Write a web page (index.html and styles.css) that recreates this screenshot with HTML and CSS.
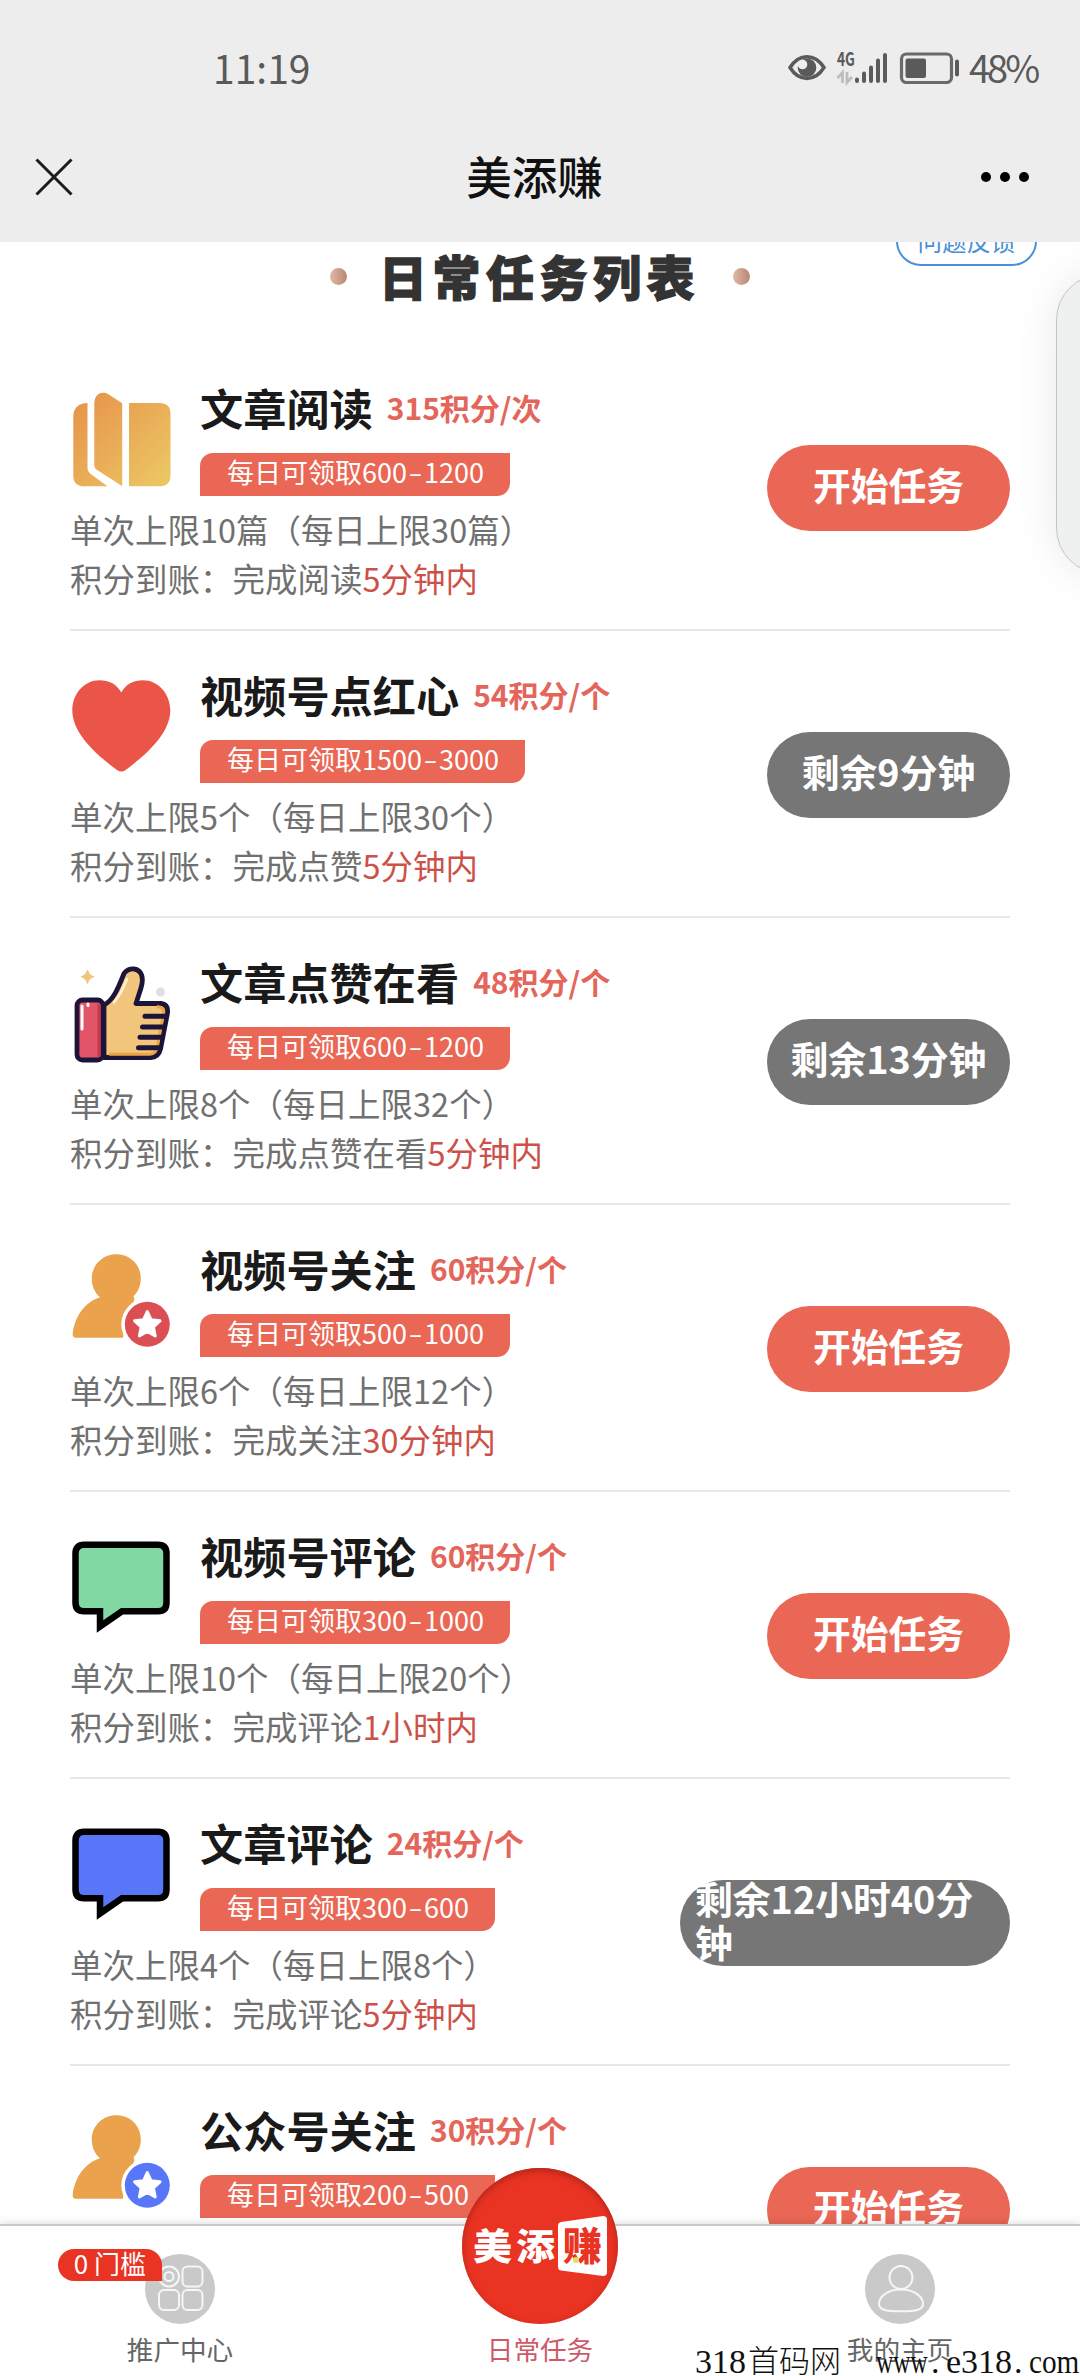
FILE: index.html
```html
<!DOCTYPE html>
<html lang="zh-CN">
<head>
<meta charset="utf-8">
<title>美添赚</title>
<link rel="stylesheet" href="styles.css">
</head>
<body>
<svg class="defs" width="0" height="0">
  <defs>
    <linearGradient id="gold" x1="0" y1="0" x2="100" y2="100" gradientUnits="userSpaceOnUse">
      <stop offset="0" stop-color="#e68f48"/><stop offset="1" stop-color="#ecca66"/>
    </linearGradient>
    <symbol id="user" viewBox="0 0 100 100">
      <path fill="#eaa24d" d="M45.3 4.3C59 4.3 69.8 14.500 69.800 28.500C69.800 36 67 42 62.500 46L63.500 49.500L54 70L52 87.700H5Q1.300 87.700 1.700 83.500C4 66 14 52 29 47.300C24 43 20.800 36.500 20.800 28.500C20.800 14.500 32 4.300 45.300 4.300Z"/>
      <circle cx="76.300" cy="74.300" r="26" fill="#fff"/>
      <circle cx="76.300" cy="74.300" r="22.500" fill="currentColor"/>
      <path fill="#fff" stroke="#fff" stroke-width="3" stroke-linejoin="round" d="M76.300 61.500L80.100 69.800L89 70.800L82.400 76.900L84.200 86L76.300 81.500L68.400 86L70.200 76.900L63.600 70.800L72.500 69.800Z"/>
    </symbol>
    <symbol id="bubble" viewBox="0 0 100 100">
      <path fill="currentColor" stroke="#000" stroke-width="6.500" d="M13 7.700H87Q95.500 7.700 95.500 16.500V65.500Q95.500 74.300 87 74.300H51L29 89.500V74.300H13Q4.500 74.300 4.500 65.500V16.500Q4.500 7.700 13 7.700Z"/>
    </symbol>
  </defs>
</svg>

<div class="page">
  <header class="top">
    <div class="status">
      <span class="clock">11:19</span>
      <div class="indicators">
        <svg width="172" height="34" viewBox="0 0 172 34">
          <path d="M2 15.500C11 1 27 1 36 15.500C27 30 11 30 2 15.500Z" fill="none" stroke="#5a5a5a" stroke-width="3.500"/>
          <circle cx="19" cy="15.700" r="9.300" fill="#5a5a5a"/>
          <circle cx="14.500" cy="12.500" r="4.800" fill="#ededed"/>
          <text class="net" x="49" y="14" textLength="18" lengthAdjust="spacingAndGlyphs">4G</text>
          <path d="M54.500 31V20.500L49.500 26M59 20V30.500L64 25" fill="none" stroke="#bdbdbd" stroke-width="2.800"/>
          <g stroke="#5a5a5a" stroke-width="4" stroke-linecap="round">
            <path d="M69 27.500V29M76 21.500V29M83 15.500V29M90 8.500V29M97 3V29"/>
          </g>
          <rect x="113.500" y="2" width="50" height="28.500" rx="5" fill="none" stroke="#6a6a6a" stroke-width="3.200"/>
          <rect x="117.500" y="6.500" width="20.500" height="19.500" rx="2" fill="#5a5a5a"/>
          <path d="M169 9.500V22.500" stroke="#5a5a5a" stroke-width="4" stroke-linecap="round"/>
        </svg>
        <span>48%</span>
      </div>
    </div>
    <div class="titlebar">
      <svg width="38" height="38" viewBox="0 0 38 38"><path d="M1.500 1.500L36.500 36.500M36.500 1.500L1.500 36.500" stroke="#1c1c1c" stroke-width="3"/></svg>
      <h1>美添赚</h1>
      <svg width="50" height="12" viewBox="0 0 50 12"><circle cx="6" cy="6" r="5"/><circle cx="25" cy="6" r="5"/><circle cx="44" cy="6" r="5"/></svg>
    </div>
  </header>

  <main class="content">
    <button class="feedback">问题反馈</button>
    <div class="heading"><i></i><h2>日常任务列表</h2><i></i></div>

    <ul class="tasks">
      <li class="task">
        <div class="info">
          <div class="head">
            <svg class="icon" viewBox="0 0 100 100">
              <g fill="url(#gold)">
                <path d="M16.500 14V79Q16.500 82 19 84.500L36.500 97.300H13Q2.300 97.300 2.300 86.500V27Q3 14.500 16.500 14Z"/>
                <path d="M23.300 13Q24.500 3.700 32.500 3.700Q35 3.700 37 5L51.200 14.300V97.300L25.500 80.500Q23.300 79 23.300 76.500Z"/>
                <path d="M58 14H88.500Q99.500 14 99.500 25V86.500Q99.500 97.300 88.500 97.300H58Z"/>
              </g>
            </svg>
            <div>
              <div class="name"><h3>文章阅读</h3><b>315积分/次</b></div>
              <span class="tag">每日可领取600<i>-</i>1200</span>
            </div>
          </div>
          <p>单次上限10篇（每日上限30篇）</p>
          <p>积分到账：完成阅读<em>5分钟内</em></p>
        </div>
        <button class="action">开始任务</button>
      </li>

      <li class="task">
        <div class="info">
          <div class="head">
            <svg class="icon" viewBox="0 0 100 100"><path fill="#eb5548" d="M50.300 16.500C46 8.500 38 4.300 28.500 4.300C13 4.300 1.300 18 1.300 34.500C1.300 58 27 80 46 94Q50.300 97 54.600 94C73.500 80 99.300 58 99.300 34.500C99.300 18 87.500 4.300 72 4.300C62.500 4.300 54.500 8.500 50.300 16.500Z"/></svg>
            <div>
              <div class="name"><h3>视频号点红心</h3><b>54积分/个</b></div>
              <span class="tag">每日可领取1500<i>-</i>3000</span>
            </div>
          </div>
          <p>单次上限5个（每日上限30个）</p>
          <p>积分到账：完成点赞<em>5分钟内</em></p>
        </div>
        <button class="action waiting">剩余9分钟</button>
      </li>

      <li class="task">
        <div class="info">
          <div class="head">
            <svg class="icon" viewBox="0 0 100 100">
              <path fill="#f0c67e" d="M16.500 7Q18 12.500 23 13.700Q18 15 16.500 20.500Q15 15 10 13.700Q15 12.500 16.500 7Z" stroke="#f0c67e"/>
              <circle cx="89.500" cy="29" r="4.500" fill="#dedee6"/>
              <path fill="#f1c67c" stroke="#1d1539" stroke-width="4.800" stroke-linejoin="round" d="M33 42C43 37 48 23 53 10.500Q57 5.500 63 6C71 7 73 15 70 25L65 40.500H90Q97.500 41.500 96.500 50L89.500 86Q87.500 94.500 79.500 94.500H33Z"/>
              <path d="M86 43.500Q93.500 44 92.500 50L86.500 83Q85 91 79 91.200H38" fill="none" stroke="#eda544" stroke-width="3"/>
              <path d="M43 39.500Q50 31 56 16" fill="none" stroke="#fff1d8" stroke-width="2.500" stroke-linecap="round"/>
              <path stroke="#1d1539" stroke-width="5" stroke-linecap="round" d="M74 53.300H95M71.500 64H93M69 74.300H91M67.500 84.700H89"/>
              <rect x="6" y="37" width="26" height="60" rx="5.500" fill="#e25568" stroke="#1d1539" stroke-width="4.800"/>
              <path d="M28 41V94" stroke="#c9364f" stroke-width="3"/>
              <path d="M11 43V66M17 41V42.500" stroke="#fff" stroke-width="3" stroke-linecap="round"/>
            </svg>
            <div>
              <div class="name"><h3>文章点赞在看</h3><b>48积分/个</b></div>
              <span class="tag">每日可领取600<i>-</i>1200</span>
            </div>
          </div>
          <p>单次上限8个（每日上限32个）</p>
          <p>积分到账：完成点赞在看<em>5分钟内</em></p>
        </div>
        <button class="action waiting">剩余13分钟</button>
      </li>

      <li class="task">
        <div class="info">
          <div class="head">
            <svg class="icon red"><use href="#user"/></svg>
            <div>
              <div class="name"><h3>视频号关注</h3><b>60积分/个</b></div>
              <span class="tag">每日可领取500<i>-</i>1000</span>
            </div>
          </div>
          <p>单次上限6个（每日上限12个）</p>
          <p>积分到账：完成关注<em>30分钟内</em></p>
        </div>
        <button class="action">开始任务</button>
      </li>

      <li class="task">
        <div class="info">
          <div class="head">
            <svg class="icon green"><use href="#bubble"/></svg>
            <div>
              <div class="name"><h3>视频号评论</h3><b>60积分/个</b></div>
              <span class="tag">每日可领取300<i>-</i>1000</span>
            </div>
          </div>
          <p>单次上限10个（每日上限20个）</p>
          <p>积分到账：完成评论<em>1小时内</em></p>
        </div>
        <button class="action">开始任务</button>
      </li>

      <li class="task">
        <div class="info">
          <div class="head">
            <svg class="icon blue"><use href="#bubble"/></svg>
            <div>
              <div class="name"><h3>文章评论</h3><b>24积分/个</b></div>
              <span class="tag">每日可领取300<i>-</i>600</span>
            </div>
          </div>
          <p>单次上限4个（每日上限8个）</p>
          <p>积分到账：完成评论<em>5分钟内</em></p>
        </div>
        <button class="action waiting">剩余12小时40分钟</button>
      </li>

      <li class="task">
        <div class="info">
          <div class="head">
            <svg class="icon blue"><use href="#user"/></svg>
            <div>
              <div class="name"><h3>公众号关注</h3><b>30积分/个</b></div>
              <span class="tag">每日可领取200<i>-</i>500</span>
            </div>
          </div>
        </div>
        <button class="action">开始任务</button>
      </li>
    </ul>
    <div class="drawer"></div>
  </main>

  <nav class="tabs">
    <a class="tab">
      <svg width="70" height="70" viewBox="0 0 70 70">
        <circle cx="35" cy="35" r="35" fill="#c9c9c9"/>
        <g fill="none" stroke="#f6f6f6" stroke-width="2">
          <circle cx="24" cy="22.500" r="10"/><circle cx="24" cy="22.500" r="4.500"/>
          <rect x="37.500" y="12.500" width="20" height="20" rx="5"/>
          <rect x="14" y="36" width="20" height="20" rx="5"/>
          <rect x="37.500" y="36" width="20" height="20" rx="5"/>
        </g>
      </svg>
      <span>推广中心</span>
      <b class="badge">0 门槛</b>
    </a>
    <a class="tab current">
      <div class="logo">
        <span>美添</span>
        <div class="door">
          <svg viewBox="0 0 49 60"><path d="M3 6L45 0Q49 0 49 4V56Q49 60 45 60L3 54.500Q0 54 0 50V10Q0 6.500 3 6Z" fill="#fff"/></svg>
          <span>赚</span>
          <svg viewBox="0 0 49 60"><circle cx="18" cy="44" r="3" fill="#e9dc55"/></svg>
        </div>
      </div>
      <span>日常任务</span>
    </a>
    <a class="tab">
      <svg width="70" height="70" viewBox="0 0 70 70">
        <circle cx="35" cy="35" r="35" fill="#c9c9c9"/>
        <g fill="none" stroke="#f6f6f6" stroke-width="2">
          <circle cx="36" cy="23.500" r="11.500"/>
          <path d="M36 35.500C50 35.500 58 43 58 50C58 55.500 52 57.300 36 57.300C20 57.300 14 55.500 14 50C14 43 22 35.500 36 35.500Z"/>
        </g>
      </svg>
      <span>我的主页</span>
    </a>
  </nav>
  <div class="watermark">318<span class="han">首码网</span><span class="www">www</span><span class="dot">.</span>e318<span class="dot">.</span><span class="com">com</span></div>
</div>
</body>
</html>
```

FILE: styles.css
```css
* { box-sizing: border-box; margin: 0; padding: 0; }
body { font-family: "Noto Sans CJK SC", sans-serif; background: #fff; }
i, em { font-style: normal; }
ul { list-style: none; }
button { font-family: inherit; border: 0; }
svg { display: block; flex: none; }
.defs { position: absolute; }

.page { position: relative; width: 1080px; height: 2376px; display: flex; flex-direction: column; overflow: hidden; }

/* header */
.top { height: 242px; background: #ededed; flex: none; }
.status { height: 112px; padding: 46px 42px 0 213px; display: flex; justify-content: space-between; color: #5a5a5a; font-size: 39px; line-height: 42px; }
.indicators { display: flex; gap: 9px; }
.indicators svg { margin-top: 6px; }
.indicators span { width: 69px; font-size: 38px; letter-spacing: -3px; }
.net { font: bold 19px "Noto Sans CJK SC", sans-serif; fill: #5a5a5a; }
.titlebar { height: 130px; padding: 0 50px 0 35px; display: grid; grid-template-columns: 1fr auto 1fr; align-items: center; }
.titlebar svg:last-child { justify-self: end; }
.titlebar h1 { font-size: 45.500px; line-height: 60px; font-weight: 500; color: #111; transform: translate(2px, -2px); }

/* content */
.content { position: relative; flex: 1; min-height: 0; overflow: hidden; }
.feedback { position: absolute; top: -26px; right: 43px; width: 141px; height: 50px; border: 2px solid #4b90d6; border-radius: 25px; background: #fff; color: #4b90d6; font-size: 24.500px; line-height: 46px; }
.heading { height: 102px; padding: 2px 0 36px; display: flex; justify-content: center; align-items: center; gap: 35px; }
.heading h2 { font-size: 48px; line-height: 60px; font-weight: 900; letter-spacing: 5.500px; margin-right: -5px; color: #333; transform: translate(-3px, -1px); -webkit-text-stroke: 1.200px #333; }
.heading i { width: 17px; height: 17px; border-radius: 50%; background: linear-gradient(90deg, #dfb9a6, #b98672); }
.drawer { position: absolute; left: 1056px; top: 32px; width: 100px; height: 300px; border: 1px solid #c4c6c6; border-radius: 46px; background: #eff0f0; box-shadow: 0 0 44px rgba(0, 0, 0, .09); }

/* task list */
.tasks { padding: 0 70px; }
.task { height: 287px; border-bottom: 2px solid #e7e7e7; display: flex; justify-content: space-between; align-items: flex-start; }
.info { padding-top: 38px; }
.head { height: 122px; display: flex; align-items: flex-start; gap: 29px; }
.icon { width: 100px; height: 100px; margin: 7px 0 0 1px; }
.red { color: #db4f54; }
.green { color: #82d8a2; }
.blue { color: #5776f8; }
.name { display: flex; align-items: center; gap: 14px; height: 50px; margin-bottom: 21px; white-space: nowrap; }
.name h3 { font-size: 43.200px; line-height: 50px; font-weight: 700; color: #1a1a1a; }
.name b { font-size: 30px; line-height: 50px; color: #e4655a; }
.tag { display: inline-flex; height: 43px; padding: 0 26px 0 27px; background: #ea6756; border-radius: 13px 0 13px 0; color: #fff; font-size: 27px; line-height: 38px; }
.tag i { width: 17px; text-align: center; transform: scaleX(1.500); }
.info p { font-size: 32.400px; line-height: 49px; letter-spacing: .1px; color: #707070; white-space: nowrap; transform: translateY(-.5px); }
.info em { color: #cc5148; }
.action { min-width: 243px; max-width: 330px; height: 86px; margin-top: 101px; padding: 0 15px 9px; border-radius: 43px; background: #ea6756; color: #fff; font-size: 37.800px; line-height: 43px; font-weight: 700; display: flex; justify-content: center; align-items: center; text-align: left; }
.waiting { background: #767676; }

/* bottom tabs */
.tabs { position: relative; height: 152px; flex: none; display: grid; grid-template-columns: repeat(3, 1fr); background: #fff; border-top: 2px solid #c9c9c9; box-shadow: 0 -1px 8px rgba(0, 0, 0, .13); }
.tab { position: relative; padding-top: 28px; display: flex; flex-direction: column; align-items: center; color: #666; font-size: 26.600px; }
.tab > span { line-height: 40px; margin-top: 5px; }
.current { color: #cd596b; padding-top: 0; }
.badge { position: absolute; left: 58px; top: 23px; width: 104px; height: 32px; border-radius: 16px 16px 0 16px; background: #e93323; color: #fff; font-size: 26px; font-weight: 400; line-height: 28px; text-align: center; }
.logo { width: 156px; height: 156px; margin-top: -58px; padding: 0 11px; border-radius: 50%; background: #e93323; box-shadow: inset 0 3px 7px #b3261a; display: flex; align-items: center; justify-content: space-between; color: #fff; font-size: 39px; font-weight: 900; white-space: nowrap; }
.logo > span { line-height: 60px; letter-spacing: 4px; margin-right: -4px; transform: translateY(-2px) scaleY(.92); }
.door { display: grid; width: 49px; height: 60px; }
.door svg, .door span { grid-area: 1 / 1; }
.door span { color: #e93323; font-size: 39px; line-height: 55px; padding-left: 5px; }

.watermark { position: absolute; right: 0; bottom: -6px; display: flex; font-family: "Liberation Serif", "Noto Sans CJK SC", serif; font-size: 34px; line-height: 40px; color: #111; white-space: nowrap; }
.han { font-weight: 300; width: 130px; padding-left: 2px; font-size: 31px; }
.www { width: 53px; transform: scaleX(.7); transform-origin: left; }
.dot { width: 17px; padding-left: 2px; }
.com { width: 51px; transform: scaleX(.86); transform-origin: left; }
```
